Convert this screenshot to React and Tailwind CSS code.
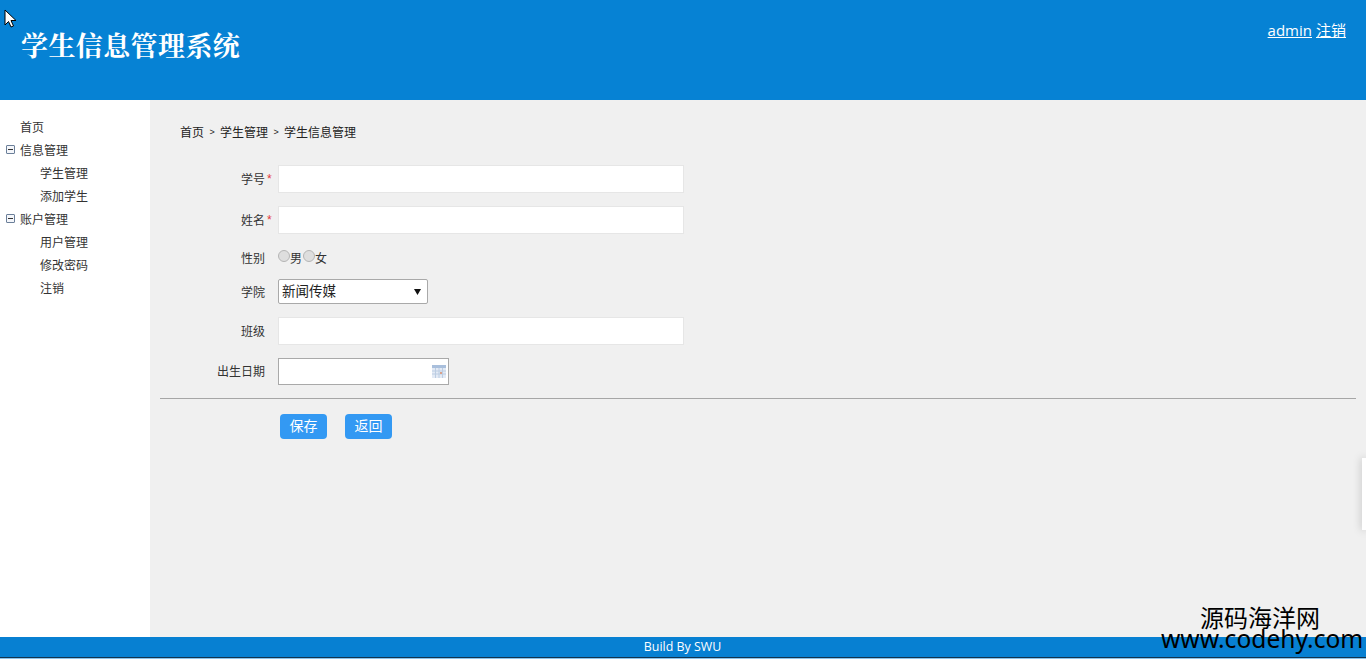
const FONT = '"Liberation Sans", "Noto Sans CJK SC", sans-serif';

function Tree({ label, children, sign }) {
  return (
    <div className={"h-[23px] flex items-center relative text-[12px] text-[#333] " + (children ? "pl-[40px]" : "pl-[20px]")}>
      {sign && (
        <span className="absolute left-[6px] top-[6px] w-[9px] h-[9px] border border-[#6b7f99] rounded-[1px] flex items-center justify-center bg-[#f4f6fa]">
          <span className="w-[5px] h-px bg-[#333]" />
        </span>
      )}
      {label}
    </div>
  );
}

function Row({ label, star, className, labelClass = "pt-[2px]", children }) {
  return (
    <div className={"flex items-center " + className}>
      <div className={"w-[105px] text-right text-[12px] text-[#333] relative " + labelClass}>
        {label}
        {star && <span className="absolute left-[107px] top-[1px] text-[#e4393c] text-[12px]">*</span>}
      </div>
      <div className="ml-[13px] flex items-center">{children}</div>
    </div>
  );
}

function TextBox() {
  return <input className="w-[406px] h-full bg-white border border-[#e6e6e6] outline-none" />;
}

function Radio({ label }) {
  return (
    <span className="flex items-center text-[12px] text-[#333] h-[16px] pt-[2px]">
      <span className="w-[12px] h-[12px] rounded-full border border-[#b5b5b5] bg-[#dedede] -mt-[6px]" />
      {label}
    </span>
  );
}

function Btn({ children }) {
  return (
    <button className="w-[47px] h-[25px] rounded-[4px] bg-[#3399f3] text-white text-[14px] flex items-center justify-center">
      {children}
    </button>
  );
}

export default function App() {
  return (
    <div className="relative w-[1366px] h-[659px] overflow-hidden flex flex-col bg-white" style={{ fontFamily: FONT }}>
      <header className="h-[100px] shrink-0 bg-[#0682d4] flex justify-between items-start text-white">
        <h1 className="ml-[21px] mt-[27px] text-[27px] leading-[36px] font-bold tracking-[0.4px]" style={{ fontFamily: '"Noto Serif CJK SC", "Liberation Serif", serif' }}>学生信息管理系统</h1>
        <div className="mt-[20px] mr-[20px] text-[15px] leading-[20px] flex gap-[4px]" style={{ fontFamily: '"Open Sans", "Noto Sans CJK SC", sans-serif' }}>
          <a className="underline">admin</a>
          <a className="underline">注销</a>
        </div>
      </header>

      <div className="flex-1 flex min-h-0">
        <aside className="w-[150px] shrink-0 bg-white pt-[16px]">
          <Tree label="首页" />
          <Tree label="信息管理" sign />
          <Tree label="学生管理" children />
          <Tree label="添加学生" children />
          <Tree label="账户管理" sign />
          <Tree label="用户管理" children />
          <Tree label="修改密码" children />
          <Tree label="注销" children />
        </aside>

        <main className="flex-1 bg-[#f0f0f0] px-[10px]">
          <div className="ml-[20px] mt-[24px] h-[17px] flex items-center gap-[5px] text-[12px] text-[#222]">
            <span>首页</span>
            <span className="text-[9px] w-[6px] text-center">&gt;</span>
            <span>学生管理</span>
            <span className="text-[9px] w-[6px] text-center">&gt;</span>
            <span>学生信息管理</span>
          </div>

          <Row label="学号" star className="h-[28px] mt-[24px]">
            <div className="h-[28px]"><TextBox /></div>
          </Row>
          <Row label="姓名" star className="h-[28px] mt-[13px]">
            <div className="h-[28px]"><TextBox /></div>
          </Row>
          <Row label="性别" className="h-[16px] mt-[16px]">
            <span className="flex gap-[1px]">
              <Radio label="男" />
              <Radio label="女" />
            </span>
          </Row>
          <Row label="学院" className="h-[25px] mt-[13px]">
            <div className="relative w-[150px] h-[25px]">
              <select className="appearance-none w-full h-full bg-white border border-[#a9a9a9] rounded-[2px] pl-[3px] pt-[1px] text-[13.5px] text-[#222] outline-none">
                <option>新闻传媒</option>
              </select>
              <svg className="absolute right-[7px] top-[10px]" width="7" height="6" viewBox="0 0 7 6">
                <path d="M0 0H7L3.5 6Z" fill="#111" />
              </svg>
            </div>
          </Row>
          <Row label="班级" className="h-[28px] mt-[13px]">
            <div className="h-[28px]"><TextBox /></div>
          </Row>
          <Row label="出生日期" labelClass="" className="h-[27px] mt-[13px]">
            <div className="relative w-[171px] h-[27px]">
              <input className="w-full h-full bg-white border border-[#a9a9a9] outline-none" />
              <svg className="absolute right-[3px] top-[7px]" width="14" height="13" viewBox="0 0 14 13">
                <rect x="0" y="0" width="14" height="13" fill="#e3eaf5" />
                <rect x="0" y="0" width="14" height="3" fill="#a9bfdc" />
                <path d="M0 6H14M0 9H14M3.5 3V13M7 3V13M10.5 3V13" stroke="#bccde2" strokeWidth="1" />
                <rect x="8" y="7" width="2" height="2" fill="#d9a08a" />
              </svg>
            </div>
          </Row>

          <div className="mt-[13px] h-px bg-[#a6a6a6]" />

          <div className="ml-[120px] mt-[15px] flex gap-[18px]">
            <Btn>保存</Btn>
            <Btn>返回</Btn>
          </div>
        </main>
      </div>

      <footer className="h-[20px] shrink-0 bg-[#0780d2] text-white text-[12.4px] flex items-center justify-center" style={{ fontFamily: '"Open Sans", sans-serif' }}>
        <span className="ml-[-1px]">Build By SWU</span>
      </footer>
      <div className="h-px shrink-0 bg-[#12344f]" />
      <div className="h-px shrink-0 bg-[#8cc4ea]" />

      <svg className="absolute left-[4px] top-[9px]" width="13" height="19" viewBox="0 0 13 19">
        <path d="M1 1V16L4.5 12.5L7 18L9.5 17L7 11.5H12Z" fill="#fff" stroke="#000" strokeWidth="1" />
      </svg>

      <div className="absolute right-0 top-[458px] w-[4px] h-[72px] bg-white shadow-[0_0_8px_rgba(0,0,0,0.25)]" />

      <div className="absolute left-[1200px] top-[604px] text-[24px] leading-[30px] text-black">源码海洋网</div>
      <div className="absolute left-[1161px] top-[624px] text-[24.6px] leading-[30px] text-black" style={{ fontFamily: '"Noto Sans", sans-serif' }}>www.codehy.com</div>
    </div>
  );
}
